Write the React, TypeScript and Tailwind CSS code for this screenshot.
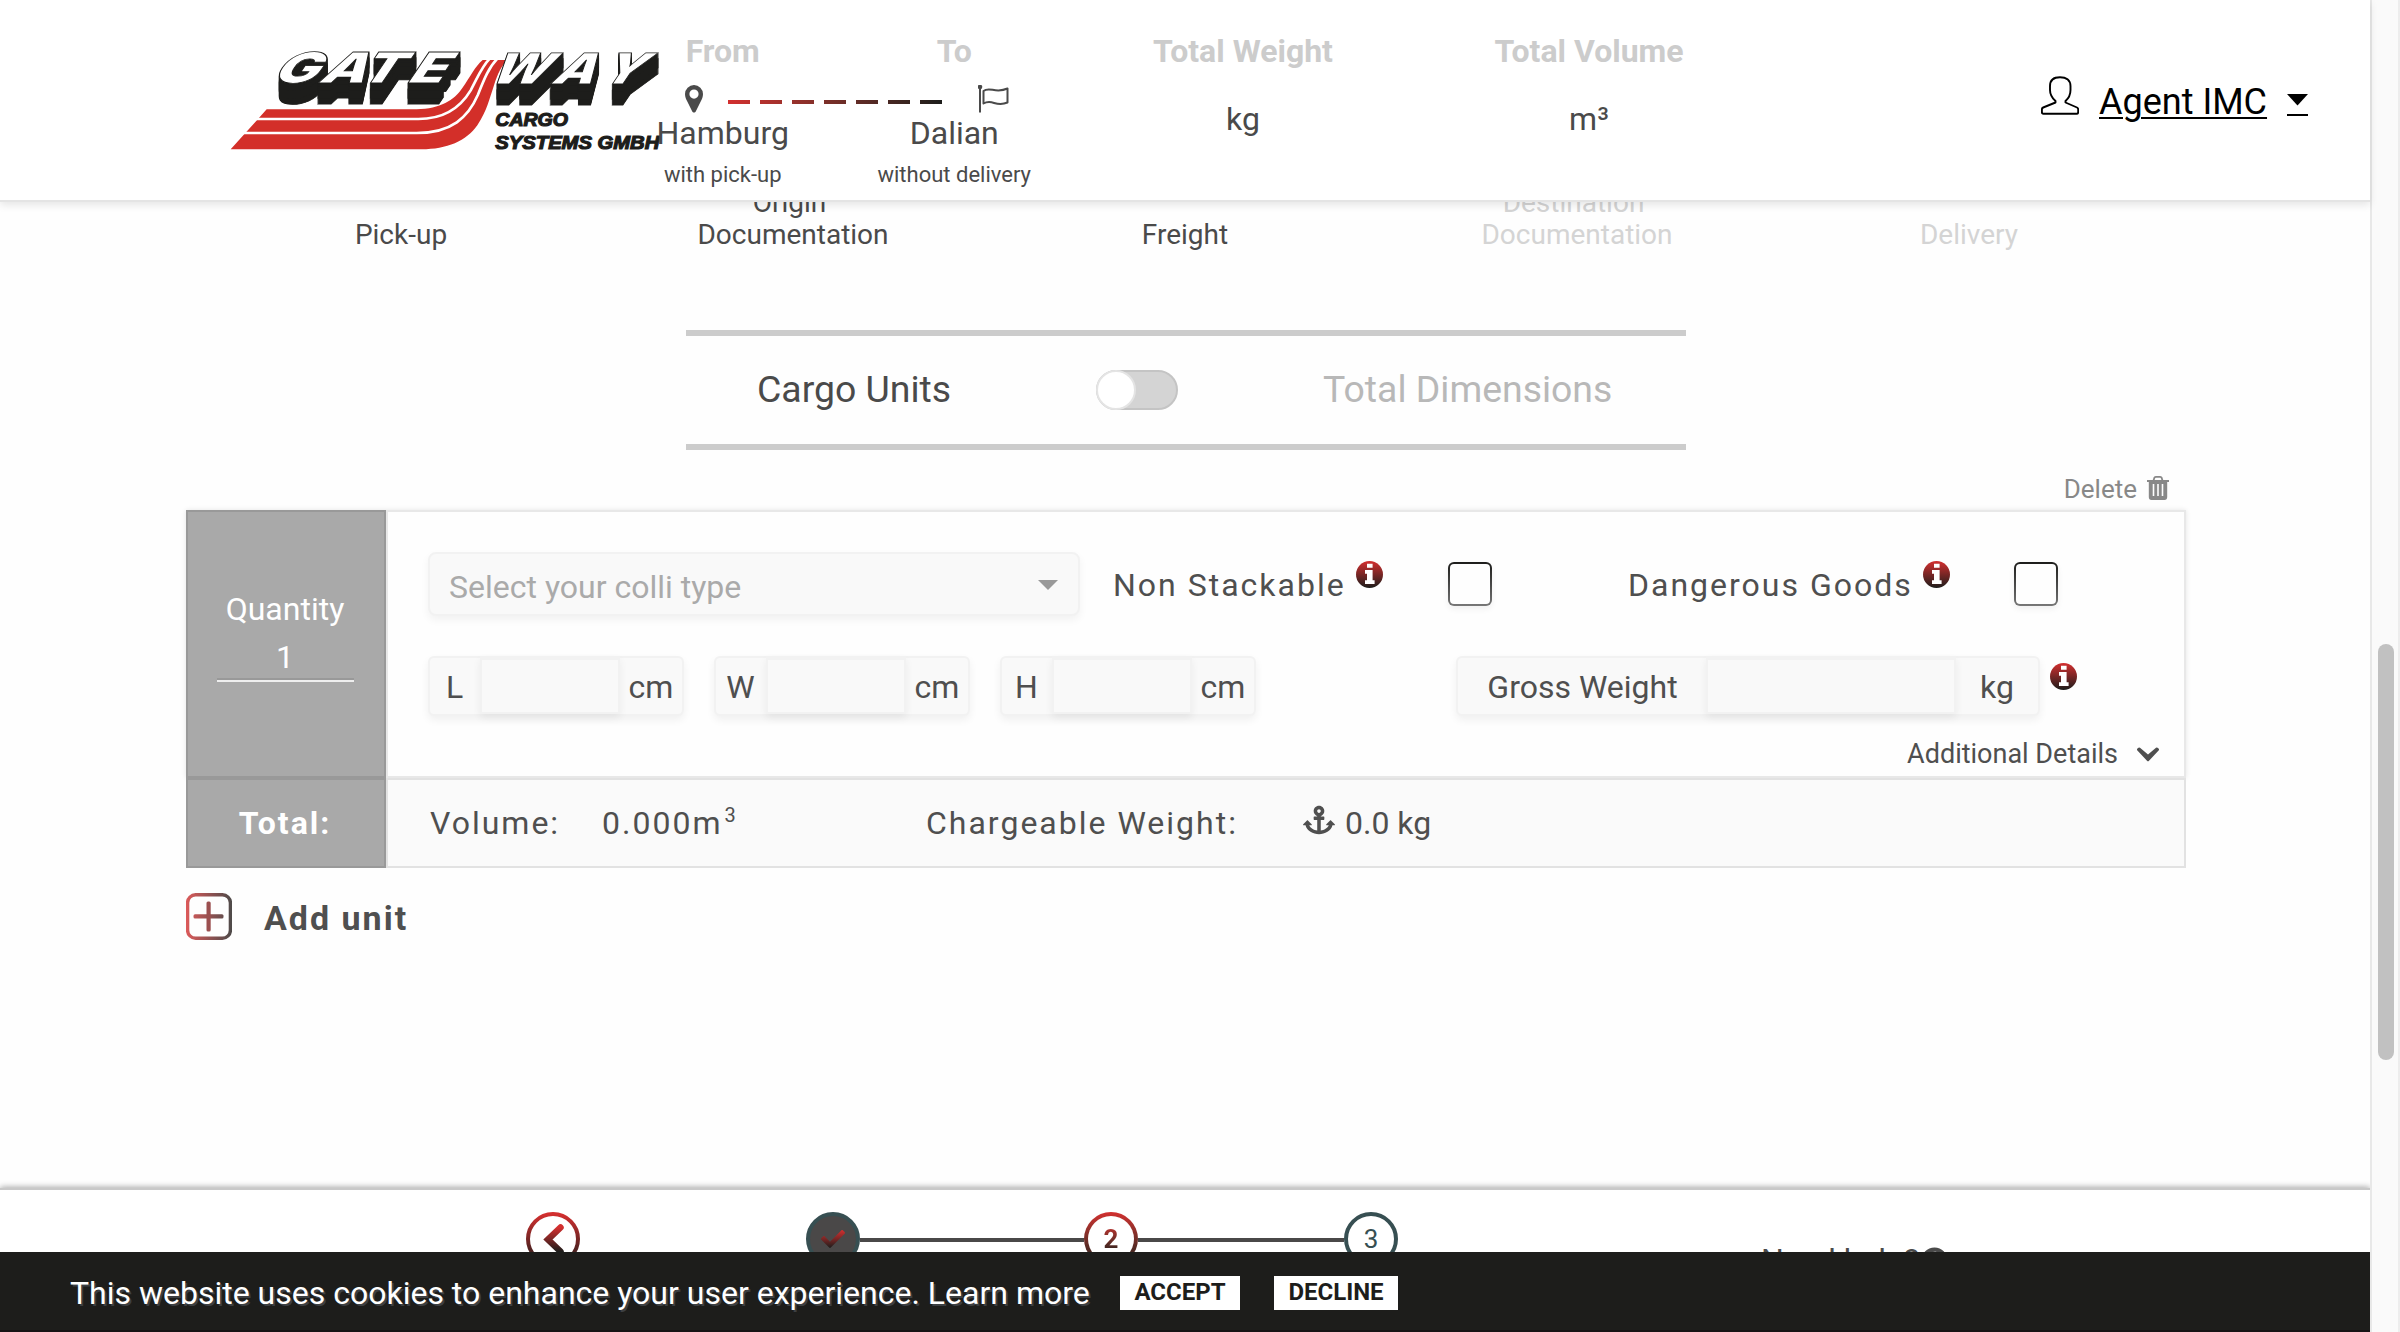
import React from "react";
import { FaAnchor, FaCheck, FaQuestionCircle } from "react-icons/fa";

function Logo() {
  return (
    <svg className="block h-[107px] w-[435px] overflow-visible" viewBox="90 80 1305 321">
      <path
        fill="#d32f29"
        d="M200 267H650C722 265 762 240 787 203C812 168 825 138 848 119H923C905 135 893 160 882 195C867 240 862 268 832 315C800 362 740 387 665 387H92Z"
      />
      <path fill="none" stroke="#fff" strokeWidth="8" d="M150 296H655C740 296 785 255 812 210C836 165 845 140 869 115" />
      <path fill="none" stroke="#fff" strokeWidth="8" d="M115 338H650C755 338 805 290 833 225C853 175 866 142 892 115" />
      <g className="[filter:drop-shadow(0_3px_0_#1d1d1b)_drop-shadow(0_6px_0_#1d1d1b)_drop-shadow(0_12px_0_#1d1d1b)_drop-shadow(0_24px_0_#1d1d1b)_drop-shadow(0_18px_0_#1d1d1b)]">
        <g fill="#fff" stroke="#1d1d1b" strokeWidth="2.5" fontSize="128" fontWeight="900" className="font-['Inter']">
          <text transform="matrix(1.38 0 -0.68 1 0 187)" x="152 254 339 446" y="0">GATE</text>
          <text transform="matrix(1.25 0 -0.68 1 0 190)" x="685 838 952" y="0">WAY</text>
        </g>
      </g>
      <g fill="#1d1d1b" stroke="#1d1d1b" strokeWidth="3.5" fontSize="55" fontWeight="700" fontStyle="italic" className="font-['Liberation_Sans']">
        <text x="886" y="317" textLength="218" lengthAdjust="spacingAndGlyphs">CARGO</text>
        <text x="886" y="387" textLength="492" lengthAdjust="spacingAndGlyphs">SYSTEMS GMBH</text>
      </g>
    </svg>
  );
}

function Gradients() {
  return (
    <svg className="absolute h-0 w-0">
      <defs>
        <linearGradient id="down" x1="0" y1="0" x2="0" y2="1">
          <stop offset="0" stopColor="#d32f2f" />
          <stop offset="1" stopColor="#1d1d1b" />
        </linearGradient>
        <linearGradient id="across" gradientUnits="userSpaceOnUse" x1="0" y1="0" x2="46" y2="0">
          <stop offset="0" stopColor="#dc5a5a" />
          <stop offset="1" stopColor="#4d4a49" />
        </linearGradient>
      </defs>
    </svg>
  );
}

function Info() {
  return (
    <svg className="block h-[27px] w-[27px] shrink-0" viewBox="0 0 27 27">
      <circle cx="13.5" cy="13.5" r="13.5" fill="url(#down)" />
      <path fill="#fff" d="M11 2.8h5.6v4H11zM9 9h7.6v10.2h2V23H9v-3.8h2v-6.4H9z" />
    </svg>
  );
}

function Measure({ label, unit, className, labelClass, inputClass, unitClass }: { label: string; unit: string; className: string; labelClass: string; inputClass: string; unitClass: string }) {
  return (
    <div className={"flex h-[60px] rounded-md border-2 border-[#f2f2f2] bg-[#f9f9f9] text-[32px] leading-[58px] shadow-[0_4px_8px_rgba(0,0,0,0.06)] " + className}>
      <div className={"text-center " + labelClass}>{label}</div>
      <div className={"-mt-0.5 h-[58px] border-2 border-t-4 border-[#f2f2f2] bg-[#f9f9f9] shadow-[0_4px_8px_rgba(0,0,0,0.06)] " + inputClass} />
      <div className={"text-center " + unitClass}>{unit}</div>
    </div>
  );
}

function Checkbox({ className }: { className: string }) {
  return (
    <div className={"h-11 w-11 shrink-0 rounded-md bg-linear-to-b from-[#1d1d1b] to-[#777] p-0.5 shadow-[0_3px_6px_rgba(0,0,0,0.06)] " + className}>
      <div className="h-full w-full rounded-[4px] bg-[#fefefe]" />
    </div>
  );
}

function Header() {
  return (
    <header className="relative z-10 flex h-[202px] shrink-0 border-b-2 border-[#e4e4e4] bg-white shadow-[0_3px_8px_rgba(0,0,0,0.1)]">
      <div className="w-[606px] shrink-0 pt-[46.67px] pl-[230px]">
        <Logo />
      </div>
      <div className="w-[464px] shrink-0 pt-[35px] text-center">
        <div className="grid grid-cols-2 pl-px text-[32px] leading-8 font-bold text-[#ccc]">
          <div>From</div>
          <div>To</div>
        </div>
        <div className="flex h-[50px] pt-[18px] pl-[79px]">
          <svg className="h-7 w-[18px]" viewBox="0 0 18 28">
            <path fill="#4a4a4a" fillRule="evenodd" d="M9 0a9 9 0 0 1 9 9c0 3-1 5-2.300 7.600L11 26c-1 2-3 2-4 0L2.300 16.600C1 14 0 12 0 9a9 9 0 0 1 9-9Zm0 4.500a4.600 4.600 0 1 0 0 9.200a4.600 4.600 0 0 0 0-9.200Z" />
          </svg>
          <div className="mt-[15px] ml-[25px] h-1 w-[214px] bg-linear-to-r from-[#d32f2f] to-[#1d1d1b]">
            <div className="h-1 w-full bg-[repeating-linear-gradient(to_right,transparent_0_22px,#fff_22px_32px)]" />
          </div>
          <svg className="ml-9 h-7 w-8" viewBox="0 0 32 28" fill="none" stroke="#4a4a4a" strokeWidth="2">
            <path d="M2 2v25.500M5.500 6c6-5 12 3 24-2.500v14c-12 5-15-4-24 1Z" strokeLinejoin="round" />
            <circle cx="2" cy="2" r="1.300" fill="#4a4a4a" />
          </svg>
        </div>
        <div className="grid grid-cols-2 pl-px text-[32px] leading-8">
          <div>Hamburg</div>
          <div>Dalian</div>
        </div>
        <div className="mt-[14px] grid grid-cols-2 pl-px text-[22px] leading-6">
          <div>with pick-up</div>
          <div>without delivery</div>
        </div>
      </div>
      <div className="grid w-[692px] shrink-0 grid-cols-2 content-start gap-y-9 pt-[35px] text-center text-[32px] leading-8">
        <div className="font-bold text-[#ccc]">Total Weight</div>
        <div className="font-bold text-[#ccc]">Total Volume</div>
        <div>kg</div>
        <div>m³</div>
      </div>
      <div className="ml-[279px] flex text-black">
        <svg className="mt-[76px] h-10 w-[38px]" viewBox="0 0 38 40" fill="none" stroke="#000" strokeWidth="1.900" strokeLinejoin="round">
          <path d="M14.500 25C11 22 9 19 9 14V10C9 4 13 1.200 19 1.200S29.500 4 29.500 10V14C29.500 19 28 22 24.500 25L24.500 26.500L36 31.500Q37.200 32 37.200 33.500V36Q37.200 37.800 35.500 37.800H2.500Q.9 37.800 .9 36V33.500Q.9 32 2.200 31.500L14.500 26.500Z" />
        </svg>
        <div className="mt-[82px] ml-5 h-10 text-4xl leading-10 underline decoration-2 underline-offset-[3px]">Agent IMC</div>
        <div className="mt-[94px] ml-5 h-[22px] w-[21px] border-b-2 border-black">
          <svg className="h-3 w-[21px]" viewBox="0 0 21 12">
            <path d="M0 0H21L10.500 11.500Z" />
          </svg>
        </div>
      </div>
    </header>
  );
}

function CargoCard() {
  return (
    <section className="ml-[186px] w-[2000px] text-[#4f4f4f]">
      <div className="flex h-[268px] shadow-[0_0_5px_rgba(0,0,0,0.1)]">
        <div className="flex w-[200px] shrink-0 flex-col items-center border-2 border-[#999] bg-[#a9a9a9] pt-[78px] pr-0.5 text-[32px] text-white">
          <div className="h-[38px] leading-[38px]">Quantity</div>
          <div className="mt-[10px] h-[44px] w-[137px] border-b-2 border-[#eee] text-center leading-[38px] shadow-[inset_0_-2px_0_#999]">1</div>
        </div>
        <div className="flex-1 border-2 border-[#e8e8e8] bg-[#fefefe] pl-10">
          <div className="flex h-[104px] pt-10">
            <div className="flex h-16 w-[652px] rounded-lg border-2 border-[#f2f2f2] bg-[#f9f9f9] pl-[19px] text-[32px] leading-[66px] text-[#aaa] shadow-[0_4px_8px_rgba(0,0,0,0.05)]">
              Select your colli type
              <svg className="mt-[26px] mr-5 ml-auto h-[10px] w-5" viewBox="0 0 20 10">
                <path fill="#999" d="M0 0H20L10 10Z" />
              </svg>
            </div>
            <div className="ml-[33px] w-[243px] text-[32px] leading-[66px] tracking-[2px]">Non Stackable</div>
            <div className="mt-[9px]"><Info /></div>
            <Checkbox className="mt-[10px] ml-[65px]" />
            <div className="ml-[136px] w-[295px] text-[32px] leading-[66px] tracking-[2px]">Dangerous Goods</div>
            <div className="mt-[9px]"><Info /></div>
            <Checkbox className="mt-[10px] ml-16" />
          </div>
          <div className="mt-10 flex">
            <Measure className="w-64" label="L" unit="cm" labelClass="w-[49px]" inputClass="ml-px w-[140px]" unitClass="w-[62px]" />
            <Measure className="ml-[30px] w-64" label="W" unit="cm" labelClass="w-[49px]" inputClass="ml-px w-[140px]" unitClass="w-[62px]" />
            <Measure className="ml-[30px] w-64" label="H" unit="cm" labelClass="w-[49px]" inputClass="ml-px w-[140px]" unitClass="w-[62px]" />
            <Measure className="ml-[200px] w-[584px]" label="Gross Weight" unit="kg" labelClass="w-[248px] pl-px" inputClass="w-[250px]" unitClass="w-[82px]" />
            <div className="mt-[7px] ml-[10px]"><Info /></div>
          </div>
          <div className="flex justify-end pt-[22px] pr-[25px] text-[27px] leading-8">
            Additional Details
            <svg className="mt-[9px] ml-[19px] h-[15px] w-[22px]" viewBox="0 0 22 15">
              <path fill="#4f4f4f" d="M3 .8L11 7.500L19 .8Q20 0 21 1L21.700 1.700Q22.500 2.600 21.600 3.600L12 13.800Q11 14.800 10 13.800L.4 3.600Q-.5 2.600 .3 1.700L1 1Q2 0 3 .8Z" />
            </svg>
          </div>
        </div>
      </div>
      <div className="flex h-[90px] text-[32px] leading-[86px] tracking-[2px]">
        <div className="w-[200px] border-2 border-[#999] bg-[#a9a9a9] pr-0.5 text-center font-bold text-white">Total:</div>
        <div className="flex flex-1 border-2 border-[#e2e2e2] bg-[#fafafa] pl-[42px]">
          <div className="w-[172px]">Volume:</div>
          <div className="w-[324px]">0.000m<span className="relative -top-3 ml-0.5 text-[20px]">3</span></div>
          <div className="w-[377px]">Chargeable Weight:</div>
          <FaAnchor className="mt-6 h-8 w-8" />
          <div className="ml-[10px] tracking-normal">0.0 kg</div>
        </div>
      </div>
      <div className="mt-6 flex">
        <svg className="mt-[1px] h-[47px] w-[46px]" viewBox="0 0 46 47" fill="none" stroke="url(#across)">
          <rect x="1.600" y="1.800" width="42.800" height="43.400" rx="8" strokeWidth="3.400" />
          <rect x="7.500" y="21.200" width="30" height="4.200" rx="1.500" fill="url(#across)" stroke="none" />
          <rect x="20.500" y="8.500" width="4.200" height="30" rx="1.500" fill="#9b4f4f" stroke="none" />
        </svg>
        <div className="ml-8 text-[34px] leading-[52px] font-bold tracking-[2px]">Add unit</div>
      </div>
    </section>
  );
}

function StepBar() {
  return (
    <div className="flex h-[64px] pt-[22px]">
      <svg className="ml-[526px] h-[54px] w-[54px] shrink-0" viewBox="0 0 54 54" fill="none">
        <circle cx="27" cy="27" r="25" stroke="url(#down)" strokeWidth="4" />
        <path d="M34.500 15.500L22 27.500L34.500 39.500" stroke="url(#down)" strokeWidth="6.500" strokeLinecap="round" />
      </svg>
      <div className="ml-[226px] flex h-[54px] w-[592px] shrink-0 items-center">
        <div className="flex h-[54px] w-[54px] shrink-0 items-center justify-center rounded-full border-4 border-[#374f52] bg-[#4a4848]">
          <FaCheck className="h-6 w-6 [&_path]:fill-[url(#down)]" />
        </div>
        <div className="mt-0.5 h-1 flex-1 bg-[#4a4848]" />
        <div className="flex h-[54px] w-[54px] shrink-0 rounded-full bg-linear-to-b from-[#d32f2f] to-[#1d1d1b] p-1">
          <div className="flex h-full w-full items-center justify-center rounded-full bg-white text-[26px] font-bold">
            <span className="bg-linear-to-b from-[#d32f2f] to-[#1d1d1b] bg-clip-text leading-8 text-transparent">2</span>
          </div>
        </div>
        <div className="mt-0.5 h-1 w-[206px] bg-[#4a4848]" />
        <div className="flex h-[54px] w-[54px] shrink-0 items-center justify-center rounded-full border-4 border-[#374f52] text-[26px] text-[#374f52]">3</div>
      </div>
      <div className="mt-[29px] ml-[363px] flex text-[32px] leading-[38px]">
        Need help?
        <FaQuestionCircle className="mt-[6px] ml-0.5 h-[27px] w-[27px]" />
      </div>
    </div>
  );
}

export default function App() {
  return (
    <div className="flex h-[1332px] w-[2400px] overflow-hidden bg-[#fefefe] font-['Roboto',sans-serif] text-[#4a4a4a]">
      <Gradients />
      <div className="flex w-[2370px] shrink-0 flex-col">
        <Header />
        <main className="flex-1">
          <div className="-mt-[15px] ml-[205px] grid w-[1960px] grid-cols-5 items-end text-center text-[28px] leading-8">
            <div>Pick-up</div>
            <div><span className="pr-[7px]">Origin</span><br />Documentation</div>
            <div>Freight</div>
            <div className="text-[#d4d4d4]"><span className="pr-[7px]">Destination</span><br />Documentation</div>
            <div className="text-[#d4d4d4]">Delivery</div>
          </div>
          <div className="mt-[79px] ml-[686px] flex h-[120px] w-[1000px] items-center border-y-[6px] border-[#ccc] pl-[71px] text-[37.400px] leading-none">
            <div className="w-[339px]">Cargo Units</div>
            <div className="h-10 w-[82px] rounded-full border-2 border-[#c4c4c4] bg-[#d4d4d4]">
              <div className="-mt-0.5 -ml-0.5 h-10 w-10 rounded-full border-2 border-[#e4e4e4] bg-white" />
            </div>
            <div className="ml-[145px] text-[#b8b8b8]">Total Dimensions</div>
          </div>
          <div className="mr-[201px] flex h-[60px] justify-end pt-[23px] text-[26px] leading-8 text-[#888]">
            Delete
            <svg className="mt-[3px] ml-[10px] h-6 w-[22px]" viewBox="0 0 22 24">
              <path fill="none" stroke="#888" strokeWidth="1.800" d="M6.500 4.500L7.500 1.500Q8 .9 9 .9H13Q14 .9 14.500 1.500L15.500 4.500" />
              <path fill="#888" fillRule="evenodd" d="M0 4H22V6H20.200V21Q20.200 24 17.500 24H4.500Q1.800 24 1.800 21V6H0ZM5.700 8V20H7.300V8ZM10.200 8V20H11.800V8ZM14.700 8V20H16.300V8Z" />
            </svg>
          </div>
          <CargoCard />
        </main>
        <footer className="shrink-0 border-t-2 border-[#c8c8c8] bg-white shadow-[0_-1px_6px_rgba(0,0,0,0.35)]">
          <div className="h-[62px]">
            <StepBar />
          </div>
          <div className="relative flex h-20 items-start border-b-2 border-[#161314] bg-[#1d1d1b] pt-6 pl-[70px] text-white">
            <div className="w-[1050px] text-[32px] leading-[34px] [text-shadow:2px_2px_0_#3c3f42]">This website uses cookies to enhance your user experience. Learn more</div>
            <button className="h-[34px] w-[120px] bg-white text-2xl leading-[32px] font-bold text-[#1d1d1b]"><span className="block h-[34px]">ACCEPT</span></button>
            <button className="ml-[34px] h-[34px] w-[124px] bg-white text-2xl leading-[32px] font-bold text-[#1d1d1b]"><span className="block h-[34px]">DECLINE</span></button>
          </div>
        </footer>
      </div>
      <div className="w-[30px] border-r-2 border-l-2 border-r-[#ededed] border-l-[#e8e8e8] bg-[#fafafa] pt-[644px]">
        <div className="ml-1.5 h-[416px] w-4 rounded-full bg-[#c1c1c1]" />
      </div>
    </div>
  );
}
